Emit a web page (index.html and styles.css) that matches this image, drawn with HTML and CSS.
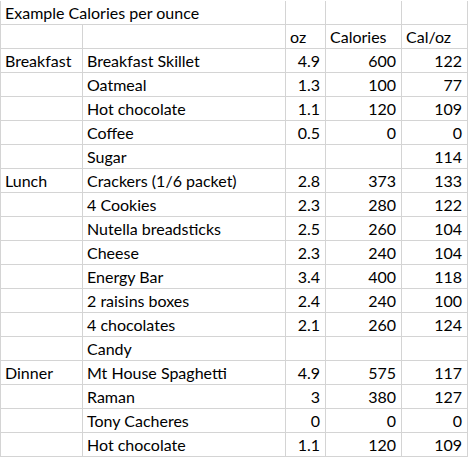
FILE: index.html
```html
<!DOCTYPE html>
<html>
<head>
<meta charset="utf-8">
<link rel="stylesheet" href="styles.css">
</head>
<body>
<div class="sheet">
  <div class="cell title">Example Calories per ounce</div><div class="cell"></div><div class="cell"></div><div class="cell"></div>
  <div class="cell"></div><div class="cell"></div><div class="cell">oz</div><div class="cell">Calories</div><div class="cell">Cal/oz</div>

  <div class="cell">Breakfast</div><div class="cell">Breakfast Skillet</div><div class="cell num">4.9</div><div class="cell num">600</div><div class="cell num">122</div>
  <div class="cell"></div><div class="cell">Oatmeal</div><div class="cell num">1.3</div><div class="cell num">100</div><div class="cell num">77</div>
  <div class="cell"></div><div class="cell">Hot chocolate</div><div class="cell num">1.1</div><div class="cell num">120</div><div class="cell num">109</div>
  <div class="cell"></div><div class="cell">Coffee</div><div class="cell num">0.5</div><div class="cell num">0</div><div class="cell num">0</div>
  <div class="cell"></div><div class="cell">Sugar</div><div class="cell num"></div><div class="cell num"></div><div class="cell num">114</div>

  <div class="cell">Lunch</div><div class="cell">Crackers (1/6 packet)</div><div class="cell num">2.8</div><div class="cell num">373</div><div class="cell num">133</div>
  <div class="cell"></div><div class="cell">4 Cookies</div><div class="cell num">2.3</div><div class="cell num">280</div><div class="cell num">122</div>
  <div class="cell"></div><div class="cell">Nutella breadsticks</div><div class="cell num">2.5</div><div class="cell num">260</div><div class="cell num">104</div>
  <div class="cell"></div><div class="cell">Cheese</div><div class="cell num">2.3</div><div class="cell num">240</div><div class="cell num">104</div>
  <div class="cell"></div><div class="cell">Energy Bar</div><div class="cell num">3.4</div><div class="cell num">400</div><div class="cell num">118</div>
  <div class="cell"></div><div class="cell">2 raisins boxes</div><div class="cell num">2.4</div><div class="cell num">240</div><div class="cell num">100</div>
  <div class="cell"></div><div class="cell">4 chocolates</div><div class="cell num">2.1</div><div class="cell num">260</div><div class="cell num">124</div>
  <div class="cell"></div><div class="cell">Candy</div><div class="cell num"></div><div class="cell num"></div><div class="cell num"></div>

  <div class="cell">Dinner</div><div class="cell">Mt House Spaghetti</div><div class="cell num">4.9</div><div class="cell num">575</div><div class="cell num">117</div>
  <div class="cell"></div><div class="cell">Raman</div><div class="cell num">3</div><div class="cell num">380</div><div class="cell num">127</div>
  <div class="cell"></div><div class="cell">Tony Cacheres</div><div class="cell num">0</div><div class="cell num">0</div><div class="cell num">0</div>
  <div class="cell"></div><div class="cell">Hot chocolate</div><div class="cell num">1.1</div><div class="cell num">120</div><div class="cell num">109</div>
</div>
</body>
</html>
```

FILE: styles.css
```css
html, body {
  margin: 0;
  padding: 0;
  background: #ffffff;
}

.sheet {
  display: grid;
  grid-template-columns: 82px 203px 40px 76px 66px;
  grid-auto-rows: 24px;
  width: 467px;
  margin-top: 1px;
  border-left: 1px solid #d4d4d4;
  font-family: Lato, "Liberation Sans", sans-serif;
  font-size: 16px;
  color: #000000;
}

.cell {
  box-sizing: border-box;
  border-right: 1px solid #d4d4d4;
  border-bottom: 1px solid #d4d4d4;
  padding: 0 4px;
  line-height: 23px;
  white-space: nowrap;
  overflow: visible;
}

.title {
  grid-column: span 2;
}

.num {
  text-align: right;
  padding-right: 5px;
}
```
